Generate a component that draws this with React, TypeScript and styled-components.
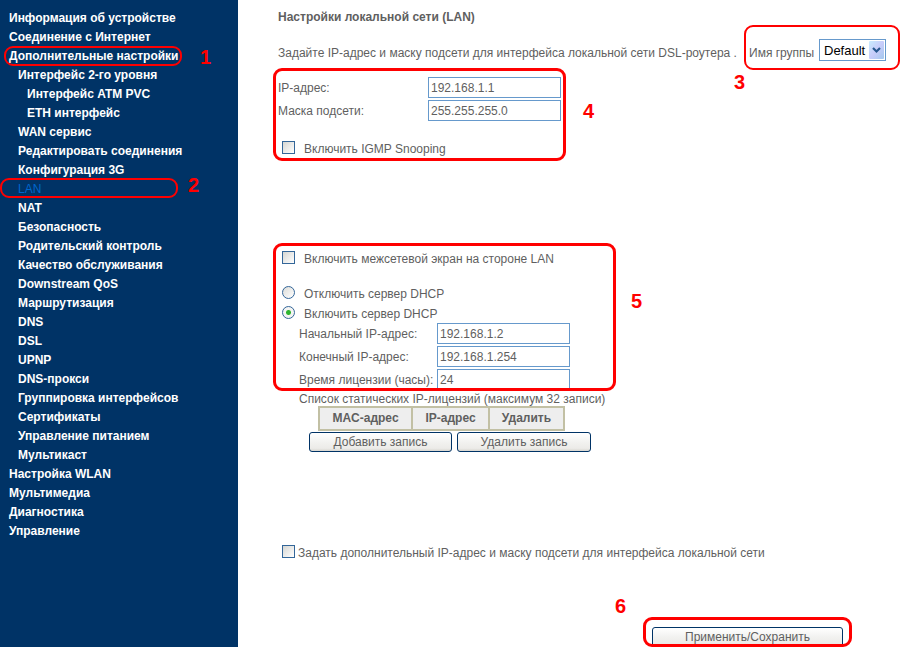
import React from "react";
import styled, { createGlobalStyle, css } from "styled-components";

const GlobalStyle = createGlobalStyle`
  *, *::before, *::after { box-sizing: border-box; }
  body {
    margin: 0;
    background: #fff;
    color: #5f5f5f;
    font: 12px/18px "Liberation Sans", Arial, sans-serif;
  }
`;

const Page = styled.div`
  display: flex;
  min-height: 100vh;
  overflow: hidden;
`;

const Sidebar = styled.nav`
  flex: 0 0 238px;
  padding: 9px 0;
  background: #003366;
`;

const Menu = styled.ul`
  margin: 0;
  padding: 0;
  list-style: none;
`;

const MenuItem = styled.li<{ $level: number }>`
  position: relative;
  height: 19px;
  padding-left: ${(p) => 9 + p.$level * 9}px;
  white-space: nowrap;
`;

const MenuLink = styled.a<{ $current?: boolean }>`
  color: ${(p) => (p.$current ? "#0066cc" : "#fff")};
  font-weight: ${(p) => (p.$current ? 400 : 700)};
  line-height: 19px;
  text-decoration: none;
`;

const Main = styled.main`
  flex: 1;
  min-width: 0;
  padding: 8px 8px 0 40px;
  white-space: nowrap;
`;

const Title = styled.h1`
  margin: 0 0 12px;
  font-size: 12px;
  line-height: 18px;
`;

const IntroRow = styled.div`
  display: flex;
  align-items: center;
  margin-bottom: 15px;
`;

const IntroText = styled.p`
  flex: 0 0 471px;
  margin: 6px 0 0;
`;

const GroupPicker = styled.div`
  position: relative;
  display: flex;
  align-items: flex-start;
  gap: 3px;
`;

const GroupLabel = styled.label`
  width: 67px;
  padding-top: 6px;
`;

const SelectBox = styled.span`
  position: relative;
  display: block;
  width: 67px;
  height: 22px;
  margin-top: 1px;
`;

const Select = styled.select`
  appearance: none;
  display: block;
  width: 100%;
  height: 100%;
  padding: 0 18px 0 4px;
  border: 1px solid #6699cc;
  border-radius: 0;
  background: #fff;
  color: #000;
  font: 13px "Liberation Sans", Arial, sans-serif;
`;

const SelectArrow = styled.svg`
  position: absolute;
  top: 2px;
  right: 2px;
  pointer-events: none;
`;

const Group = styled.section<{ $after: number }>`
  position: relative;
  margin-bottom: ${(p) => p.$after}px;
`;

const Fields = styled.div<{ $nested?: boolean }>`
  display: grid;
  grid-template-columns: ${(p) => (p.$nested ? "138px" : "150px")} 133px;
  row-gap: 2px;
  padding-left: ${(p) => (p.$nested ? 21 : 0)}px;
`;

const FieldLabel = styled.label`
  height: 21px;
  line-height: 23px;
`;

const TextInput = styled.input`
  width: 100%;
  height: 21px;
  padding: 0 2px;
  border: 1px solid #6699cc;
  border-radius: 0;
  background: #fff;
  color: #5f5f5f;
  font: 12px "Liberation Sans", Arial, sans-serif;
`;

const Option = styled.div<{ $tight?: boolean }>`
  display: flex;
  align-items: flex-start;
  gap: ${(p) => (p.$tight ? 3 : 9)}px;
  height: 17px;
  padding-left: 4px;
`;

const OptionLabel = styled.label`
  line-height: 16px;
`;

const control = css`
  appearance: none;
  flex: none;
  width: 13px;
  height: 13px;
  margin: 0;
  border: 1px solid #336699;
`;

const Checkbox = styled.input.attrs({ type: "checkbox" })`
  ${control}
  background: linear-gradient(135deg, #d6d6d2, #fff);
  &:checked { background: #336699; }
`;

const Radio = styled.input.attrs({ type: "radio" })`
  ${control}
  border-radius: 50%;
  background: linear-gradient(135deg, #dcdcd8, #fff);
  &:checked {
    background: radial-gradient(circle, #2fb52f 0 2px, #f4f4f2 3px);
  }
`;

const OptionSet = styled.div<{ $before: number }>`
  display: grid;
  row-gap: 3px;
  margin-top: ${(p) => p.$before}px;
`;

const LeaseTitle = styled.p`
  height: 16px;
  margin: 0;
  padding-left: 21px;
  line-height: 18px;
`;

const LeaseTable = styled.table`
  table-layout: fixed;
  margin-left: 40px;
  width: 245px;
  border-collapse: collapse;
  border: 2px solid #c2c0a4;
`;

const LeaseHead = styled.th<{ $width: number }>`
  width: ${(p) => p.$width}px;
  height: 23px;
  padding: 0;
  border: 2px solid #c2c0a4;
  background: #eee;
  line-height: 19px;
`;

const Actions = styled.div<{ $before: number; $indent: number }>`
  position: relative;
  display: flex;
  gap: 5px;
  margin-top: ${(p) => p.$before}px;
  padding-left: ${(p) => p.$indent}px;
`;

const Button = styled.button<{ $width: number }>`
  width: ${(p) => p.$width}px;
  height: 20px;
  padding: 0;
  border: 1px solid #003366;
  border-radius: 3px;
  background: linear-gradient(#fff, #f2f2f0 50%, #ecebe8 85%, #d8d6d0);
  color: #5f5f5f;
  font: 12px "Liberation Sans", Arial, sans-serif;
`;

type Box = { x: number; y: number; w: number; h: number };

const Outline = styled.span<{ $box: Box; $line: number }>`
  position: absolute;
  left: ${(p) => p.$box.x}px;
  top: ${(p) => p.$box.y}px;
  width: ${(p) => p.$box.w}px;
  height: ${(p) => p.$box.h}px;
  border: ${(p) => p.$line}px solid #f00;
  border-radius: 9px;
  pointer-events: none;
`;

const Mark = styled.span<{ $x: number; $y: number }>`
  position: absolute;
  left: ${(p) => p.$x}px;
  top: ${(p) => p.$y}px;
  color: #f00;
  font-size: 20px;
  font-weight: 700;
  line-height: 20px;
`;

type CalloutProps = { n: number; box: Box; line?: number; at: [number, number] };

const Callout = ({ n, box, line = 3, at }: CalloutProps) => (
  <>
    <Outline $box={box} $line={line} />
    <Mark $x={at[0]} $y={at[1]}>{n}</Mark>
  </>
);

type Entry = { text: string; level: number; current?: boolean; callout?: CalloutProps };

const menu: Entry[] = [
  { text: "Информация об устройстве", level: 0 },
  { text: "Соединение с Интернет", level: 0 },
  {
    text: "Дополнительные настройки",
    level: 0,
    callout: { n: 1, box: { x: 4, y: -1, w: 178, h: 20 }, line: 2, at: [200, 0] },
  },
  { text: "Интерфейс 2-го уровня", level: 1 },
  { text: "Интерфейс ATM PVC", level: 2 },
  { text: "ETH интерфейс", level: 2 },
  { text: "WAN сервис", level: 1 },
  { text: "Редактировать соединения", level: 1 },
  { text: "Конфигурация 3G", level: 1 },
  {
    text: "LAN",
    level: 1,
    current: true,
    callout: { n: 2, box: { x: 0, y: -2, w: 178, h: 20 }, line: 2, at: [188, -5] },
  },
  { text: "NAT", level: 1 },
  { text: "Безопасность", level: 1 },
  { text: "Родительский контроль", level: 1 },
  { text: "Качество обслуживания", level: 1 },
  { text: "Downstream QoS", level: 1 },
  { text: "Маршрутизация", level: 1 },
  { text: "DNS", level: 1 },
  { text: "DSL", level: 1 },
  { text: "UPNP", level: 1 },
  { text: "DNS-прокси", level: 1 },
  { text: "Группировка интерфейсов", level: 1 },
  { text: "Сертификаты", level: 1 },
  { text: "Управление питанием", level: 1 },
  { text: "Мультикаст", level: 1 },
  { text: "Настройка WLAN", level: 0 },
  { text: "Мультимедиа", level: 0 },
  { text: "Диагностика", level: 0 },
  { text: "Управление", level: 0 },
];

const Field = ({ id, label, value }: { id: string; label: string; value: string }) => (
  <>
    <FieldLabel htmlFor={id}>{label}</FieldLabel>
    <TextInput id={id} type="text" defaultValue={value} />
  </>
);

export default function App() {
  return (
    <>
      <GlobalStyle />
      <Page>
        <Sidebar>
          <Menu>
            {menu.map((m) => (
              <MenuItem key={m.text} $level={m.level}>
                <MenuLink href="#" $current={m.current} aria-current={m.current ? "page" : undefined}>
                  {m.text}
                </MenuLink>
                {m.callout && <Callout {...m.callout} />}
              </MenuItem>
            ))}
          </Menu>
        </Sidebar>
        <Main>
          <Title>Настройки локальной сети (LAN)</Title>
          <IntroRow>
            <IntroText>
              Задайте IP-адрес и маску подсети для интерфейса локальной сети DSL-роутера .
            </IntroText>
            <GroupPicker>
              <GroupLabel htmlFor="group">Имя группы</GroupLabel>
              <SelectBox>
                <Select id="group" defaultValue="Default">
                  <option>Default</option>
                </Select>
                <SelectArrow width="15" height="18" viewBox="0 0 15 18" aria-hidden="true">
                  <defs>
                    <linearGradient id="arrowFace" x1="0" y1="0" x2="1" y2="1">
                      <stop offset="0" stopColor="#c8ecff" />
                      <stop offset="0.5" stopColor="#c8ccfa" />
                      <stop offset="1" stopColor="#a4c8ee" />
                    </linearGradient>
                  </defs>
                  <rect width="15" height="18" rx="1" fill="url(#arrowFace)" />
                  <path d="M4 7l3.5 3.5L11 7" fill="none" stroke="#27588f" strokeWidth="2.2" />
                </SelectArrow>
              </SelectBox>
              <Callout n={3} box={{ x: -5, y: -13, w: 156, h: 45 }} line={2} at={[-15, 34]} />
            </GroupPicker>
          </IntroRow>

          <Group $after={93}>
            <Fields>
              <Field id="ip" label="IP-адрес:" value="192.168.1.1" />
              <Field id="mask" label="Маска подсети:" value="255.255.255.0" />
            </Fields>
            <OptionSet $before={20}>
              <Option>
                <Checkbox id="igmp" />
                <OptionLabel htmlFor="igmp">Включить IGMP Snooping</OptionLabel>
              </Option>
            </OptionSet>
            <Callout n={4} box={{ x: -5, y: -9, w: 293, h: 93 }} at={[305, 24]} />
          </Group>

          <Group $after={0}>
            <Option>
              <Checkbox id="firewall" />
              <OptionLabel htmlFor="firewall">Включить межсетевой экран на стороне LAN</OptionLabel>
            </Option>
            <OptionSet $before={18}>
              <Option>
                <Radio id="dhcpOff" name="dhcp" />
                <OptionLabel htmlFor="dhcpOff">Отключить сервер DHCP</OptionLabel>
              </Option>
              <Option>
                <Radio id="dhcpOn" name="dhcp" defaultChecked />
                <OptionLabel htmlFor="dhcpOn">Включить сервер DHCP</OptionLabel>
              </Option>
            </OptionSet>
            <Fields $nested>
              <Field id="start" label="Начальный IP-адрес:" value="192.168.1.2" />
              <Field id="end" label="Конечный IP-адрес:" value="192.168.1.254" />
              <Field id="lease" label="Время лицензии (часы):" value="24" />
            </Fields>
            <Callout n={5} box={{ x: -5, y: -8, w: 343, h: 148 }} at={[353, 40]} />
          </Group>

          <LeaseTitle id="leases">Список статических IP-лицензий (максимум 32 записи)</LeaseTitle>
          <LeaseTable aria-labelledby="leases">
            <thead>
              <tr>
                <LeaseHead scope="col" $width={93}>MAC-адрес</LeaseHead>
                <LeaseHead scope="col" $width={77}>IP-адрес</LeaseHead>
                <LeaseHead scope="col" $width={75}>Удалить</LeaseHead>
              </tr>
            </thead>
          </LeaseTable>
          <Actions $before={1} $indent={31}>
            <Button type="button" $width={143}>Добавить запись</Button>
            <Button type="button" $width={134}>Удалить запись</Button>
          </Actions>

          <OptionSet $before={93}>
            <Option $tight>
              <Checkbox id="second" />
              <OptionLabel htmlFor="second">
                Задать дополнительный IP-адрес и маску подсети для интерфейса локальной сети
              </OptionLabel>
            </Option>
          </OptionSet>

          <Actions $before={65} $indent={374}>
            <Button type="submit" $width={191}>Применить/Сохранить</Button>
            <Callout n={6} box={{ x: 365, y: -10, w: 209, h: 30 }} at={[337, -31]} />
          </Actions>
        </Main>
      </Page>
    </>
  );
}
